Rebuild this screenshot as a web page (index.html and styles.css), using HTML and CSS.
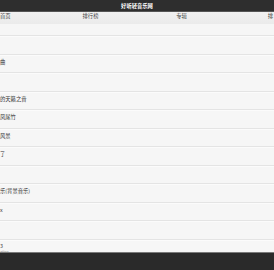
FILE: index.html
```html
<!DOCTYPE html>
<html lang="zh-CN">
<head>
    <meta charset="UTF-8">
    <meta name="viewport" content="width=device-width, initial-scale=1.0">
    <title>好听轻音乐网</title>
    <link rel="stylesheet" href="styles.css">
</head>
<body>
    <div class="page">
        <header class="topbar">好听轻音乐网</header>

        <nav class="nav">
            <a class="nav-item first">首页</a>
            <a class="nav-item">排行榜</a>
            <a class="nav-item">专辑</a>
            <a class="nav-item last">排</a>
        </nav>

        <ul class="songs">
            <li class="song short"></li>
            <li class="song"></li>
            <li class="song"><span class="name">曲</span></li>
            <li class="song"></li>
            <li class="song"><span class="name">的天籁之音</span></li>
            <li class="song"><span class="name">凤尾竹</span></li>
            <li class="song"><span class="name">风景</span></li>
            <li class="song"><span class="name">了</span></li>
            <li class="song"></li>
            <li class="song"><span class="name">乐(背景音乐)</span></li>
            <li class="song"><span class="name">x</span></li>
            <li class="song"></li>
            <li class="song two-line">
                <span class="name">3</span>
                <span class="sub">ation</span>
            </li>
        </ul>

        <footer class="footer"></footer>
    </div>
</body>
</html>
```

FILE: styles.css
```css
body {
    margin: 0;
    background: #f6f6f6;
    font-family: "Noto Sans CJK SC", "Noto Sans", sans-serif;
    color: #333;
    overflow: hidden;
}

.page {
    width: 274px;
    height: 270px;
    position: relative;
    overflow: hidden;
}

.topbar {
    height: 12px;
    line-height: 12px;
    background: #2e2e2e;
    color: #fff;
    font-size: 5.3px;
    font-weight: bold;
    text-align: center;
    border-bottom: 1px solid #555;
    box-sizing: border-box;
}

.nav {
    display: grid;
    grid-template-columns: 45px 91px 91px 1fr;
    height: 12px;
    background: linear-gradient(#f1f1f1, #ebebeb);
}

.nav-item {
    text-align: center;
    font-size: 5.3px;
    line-height: 9px;
    color: #444;
}

.nav-item.first {
    text-align: left;
}

.nav-item.last {
    text-align: right;
    padding-right: 1px;
}

.songs {
    list-style: none;
    margin: 0;
    padding: 0;
}

.song {
    height: 18.5px;
    box-sizing: border-box;
    border-bottom: 1px solid #e4e4e4;
    box-shadow: 0 1px 0 #fbfbfb;
    display: flex;
    flex-direction: column;
    justify-content: center;
    padding-bottom: 3px;
    font-size: 5.3px;
    white-space: nowrap;
}

.song.short {
    height: 12px;
}

.song .name {
    display: block;
}

.song.two-line {
    justify-content: flex-start;
    padding-top: 2px;
    padding-bottom: 0;
}

.song .sub {
    display: block;
    font-size: 3.6px;
    line-height: 4px;
    color: #888;
}

.footer {
    position: absolute;
    left: 0;
    right: 0;
    bottom: 0;
    height: 17px;
    background: #2a2a2a;
    border-top: 1px solid #7a7a7a;
}
```
